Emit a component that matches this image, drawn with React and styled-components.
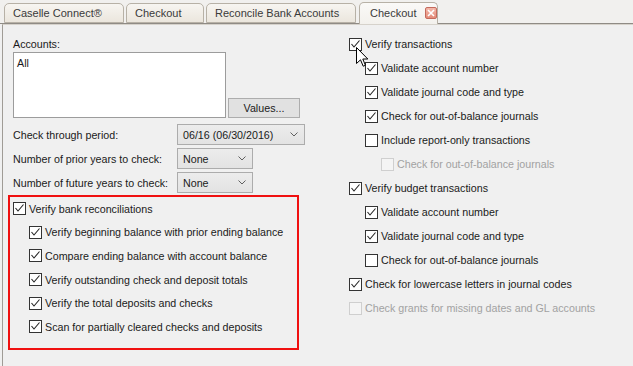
import React from "react";
import styled, { createGlobalStyle } from "styled-components";

const Global = createGlobalStyle`
  html, body { margin: 0; padding: 0; background: #f0f0f0; }
  body { font-family: "Liberation Sans", Arial, sans-serif; font-size: 10.7px; color: #1a1a1a; }
  * { box-sizing: border-box; }
`;

const Page = styled.div`
  position: relative;
  width: 633px;
  height: 366px;
  overflow: hidden;
  background: #f0f0f0;
  display: flex;
  flex-direction: column;
`;

const TabBar = styled.div`
  height: 24px;
  flex: none;
  display: flex;
  align-items: flex-end;
  padding-left: 4px;
  gap: 2px;
  border-bottom: 1px solid #8f8b85;
  background: #f1f0ee;
`;

const Tab = styled.div`
  width: ${(p) => p.$w}px;
  height: ${(p) => (p.$active ? 22 : 20)}px;
  margin-bottom: ${(p) => (p.$active ? -1 : 0)}px;
  margin-left: ${(p) => (p.$active ? 1 : 0)}px;
  border: 1px solid #b7b1a6;
  border-bottom: ${(p) => (p.$active ? "none" : "1px solid #b7b1a6")};
  border-radius: 5px 5px 0 0;
  background: ${(p) =>
    p.$active
      ? "linear-gradient(#faf9f7, #f3f1ed)"
      : "linear-gradient(#f7f5f1, #ebe6dd)"};
  display: flex;
  align-items: center;
  padding: ${(p) => (p.$active ? "0 0 2px 10px" : "0 0 0 8px")};
  gap: 9px;
  color: #3a3a3a;
  font-size: 11px;
  white-space: nowrap;
`;

const CloseBox = styled.div`
  width: 12px;
  height: 12px;
  border: 1px solid #c46a5c;
  border-radius: 2px;
  background: linear-gradient(#f4b9ab, #e48b78);
  display: flex;
  align-items: center;
  justify-content: center;
`;

const Panel = styled.div`
  flex: 1;
  margin-left: 2px;
  border-left: 1px solid #a09c96;
  border-top: 1px solid #d6d2cb;
  background: #f0f0f0;
  display: flex;
  gap: 44px;
  padding: 7px 0 0 10px;
`;

const LeftCol = styled.div`
  width: 292px;
  display: flex;
  flex-direction: column;
  padding-top: 5px;
`;

const RightCol = styled.div`
  display: flex;
  flex-direction: column;
`;

const Label = styled.div`
  height: 14px;
  line-height: 14px;
  color: #1a1a1a;
`;

const AccountsRow = styled.div`
  display: flex;
  align-items: flex-end;
  gap: 2px;
  margin-top: 1px;
`;

const ListBox = styled.div`
  width: 213px;
  height: 66px;
  background: #fff;
  border: 1px solid #9c9c9c;
  padding: 3px 3px;
  line-height: 14px;
`;

const Button = styled.div`
  width: 72px;
  height: 20px;
  border: 1px solid #adadad;
  background: #e1e1e1;
  display: flex;
  align-items: center;
  justify-content: center;
  color: #1a1a1a;
`;

const FieldRow = styled.div`
  display: flex;
  align-items: center;
  height: 21px;
  margin-top: ${(p) => p.$mt}px;
`;

const FieldLabel = styled.div`
  width: 164px;
`;

const Select = styled.div`
  width: ${(p) => p.$w}px;
  height: 21px;
  border: 1px solid #acacac;
  background: linear-gradient(#ececec, #e3e3e3);
  display: flex;
  align-items: center;
  justify-content: space-between;
  padding: 0 6px 0 5px;
  color: #1a1a1a;
`;

const RedBox = styled.div`
  margin-top: 2px;
  margin-left: -5px;
  width: 291px;
  height: 155px;
  border: 2px solid #f01010;
  padding: 0 0 0 3px;
  display: flex;
  flex-direction: column;
`;

const CheckRow = styled.div`
  height: ${(p) => p.$h || 24}px;
  flex: none;
  display: flex;
  align-items: center;
  gap: 3px;
  padding-left: ${(p) => p.$indent * 16}px;
  color: ${(p) => (p.$disabled ? "#a2a2a2" : "#1a1a1a")};
  white-space: nowrap;
`;

const Box = styled.div`
  width: 13px;
  height: 13px;
  flex: none;
  border: 1px solid ${(p) => (p.$disabled ? "#cfcfcf" : "#333333")};
  background: ${(p) => (p.$disabled ? "#f4f4f4" : "#ffffff")};
  display: flex;
`;

const Cursor = styled.svg`
  position: absolute;
  left: 356px;
  top: 47px;
`;

const Chevron = () => (
  <svg width="8" height="5" viewBox="0 0 8 5">
    <polyline points="0.5,0.5 4,4 7.5,0.5" fill="none" stroke="#606060" strokeWidth="1" />
  </svg>
);

const Check = ({ checked, disabled, indent = 0, h, children }) => (
  <CheckRow $indent={indent} $disabled={disabled} $h={h}>
    <Box $disabled={disabled}>
      {checked && (
        <svg width="11" height="11" viewBox="0 0 11 11">
          <polyline points="1.5,5 4,8 9.5,1.5" fill="none" stroke="#222" strokeWidth="1.1" />
        </svg>
      )}
    </Box>
    <span>{children}</span>
  </CheckRow>
);

export default function App() {
  return (
    <Page>
      <Global />
      <TabBar>
        <Tab $w={120}>Caselle Connect®</Tab>
        <Tab $w={78}>Checkout</Tab>
        <Tab $w={150}>Reconcile Bank Accounts</Tab>
        <Tab $w={79} $active>
          Checkout
          <CloseBox>
            <svg width="8" height="8" viewBox="0 0 8 8">
              <path d="M1 1 L7 7 M7 1 L1 7" stroke="#fff" strokeWidth="1.6" />
            </svg>
          </CloseBox>
        </Tab>
      </TabBar>
      <Panel>
        <LeftCol>
          <Label>Accounts:</Label>
          <AccountsRow>
            <ListBox>All</ListBox>
            <Button>Values...</Button>
          </AccountsRow>
          <FieldRow $mt={6}>
            <FieldLabel>Check through period:</FieldLabel>
            <Select $w={128}>
              <span>06/16 (06/30/2016)</span>
              <Chevron />
            </Select>
          </FieldRow>
          <FieldRow $mt={3}>
            <FieldLabel>Number of prior years to check:</FieldLabel>
            <Select $w={76}>
              <span>None</span>
              <Chevron />
            </Select>
          </FieldRow>
          <FieldRow $mt={3}>
            <FieldLabel>Number of future years to check:</FieldLabel>
            <Select $w={76}>
              <span>None</span>
              <Chevron />
            </Select>
          </FieldRow>
          <RedBox>
            <Check checked h={23.6}>Verify bank reconciliations</Check>
            <Check checked indent={1} h={23.6}>Verify beginning balance with prior ending balance</Check>
            <Check checked indent={1} h={23.6}>Compare ending balance with account balance</Check>
            <Check checked indent={1} h={23.6}>Verify outstanding check and deposit totals</Check>
            <Check checked indent={1} h={23.6}>Verify the total deposits and checks</Check>
            <Check checked indent={1} h={23.6}>Scan for partially cleared checks and deposits</Check>
          </RedBox>
        </LeftCol>
        <RightCol>
          <Check checked>Verify transactions</Check>
          <Check checked indent={1}>Validate account number</Check>
          <Check checked indent={1}>Validate journal code and type</Check>
          <Check checked indent={1}>Check for out-of-balance journals</Check>
          <Check indent={1}>Include report-only transactions</Check>
          <Check indent={2} disabled>Check for out-of-balance journals</Check>
          <Check checked>Verify budget transactions</Check>
          <Check checked indent={1}>Validate account number</Check>
          <Check checked indent={1}>Validate journal code and type</Check>
          <Check indent={1}>Check for out-of-balance journals</Check>
          <Check checked>Check for lowercase letters in journal codes</Check>
          <Check disabled>Check grants for missing dates and GL accounts</Check>
        </RightCol>
      </Panel>
      <Cursor width="13" height="21" viewBox="0 0 13 21">
        <path
          d="M0.5 0.5 L0.5 16.5 L4.5 12.8 L7.2 19.2 L9.4 18.3 L6.8 12 L11.8 12 Z"
          fill="#fff"
          stroke="#000"
          strokeWidth="1"
          strokeLinejoin="miter"
        />
      </Cursor>
    </Page>
  );
}
